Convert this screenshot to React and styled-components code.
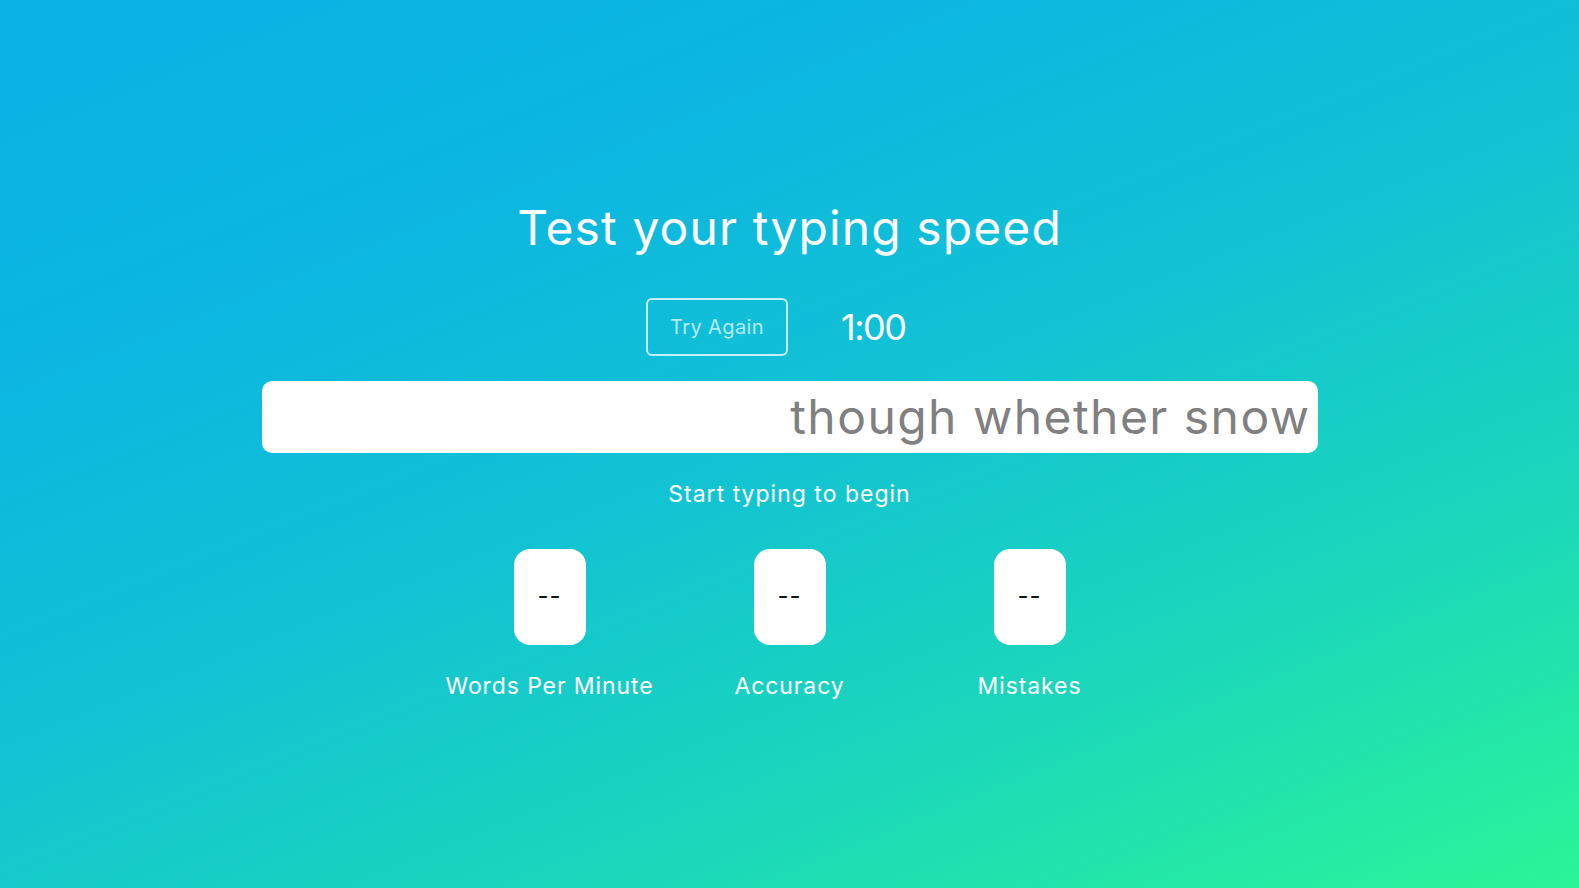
import React, { useState } from 'react';
import styled, { createGlobalStyle } from 'styled-components';

const GlobalStyle = createGlobalStyle`
  html, body {
    margin: 0;
    padding: 0;
  }
  body {
    font-family: 'Inter', 'Noto Sans', sans-serif;
    -webkit-font-smoothing: antialiased;
  }
  * {
    box-sizing: border-box;
  }
`;

// blue for most of the page, green pooling in the lower right corner
const Page = styled.main`
  min-height: 100vh;
  display: flex;
  flex-direction: column;
  align-items: center;
  padding-top: 199px;
  background: linear-gradient(
    158deg,
    #0ab2e4 0%,
    #0cb6e1 25%,
    #12c3d3 50%,
    #1cd8b9 75%,
    #2af598 100%
  );
  color: #ffffff;
`;

const Title = styled.h1`
  margin: 0;
  font-size: 48px;
  line-height: 58px;
  font-weight: 400;
  letter-spacing: 1.1px;
`;

const Controls = styled.div`
  display: flex;
  align-items: center;
  margin-top: 41px;
`;

const RetryButton = styled.button`
  width: 142px;
  height: 58px;
  border: 2px solid rgba(255, 255, 255, 0.75);
  border-radius: 6px;
  background: transparent;
  color: rgba(255, 255, 255, 0.7);
  font-family: inherit;
  font-size: 20px;
  letter-spacing: 0.4px;
  cursor: pointer;
`;

const Timer = styled.div`
  width: 92px;
  margin-left: 53px;
  font-size: 36px;
  line-height: 44px;
  letter-spacing: -1.5px;
  text-align: left;
`;

const Track = styled.div`
  width: 1056px;
  height: 72px;
  margin-top: 25px;
  padding: 0 7px 0 10px;
  border-radius: 10px;
  background: #ffffff;
  color: #808080;
  font-size: 48px;
  line-height: 72px;
  text-align: right;
  white-space: nowrap;
  overflow: hidden;
  letter-spacing: 1.45px;
`;

const Hint = styled.p`
  margin: 25px 0 0;
  font-size: 23px;
  line-height: 33px;
  letter-spacing: 1px;
`;

const Stats = styled.div`
  display: grid;
  grid-template-columns: repeat(3, 240px);
  margin-top: 38px;
`;

const Stat = styled.div`
  display: flex;
  flex-direction: column;
  align-items: center;
`;

const StatValue = styled.div`
  width: 72px;
  height: 96px;
  display: flex;
  align-items: center;
  justify-content: center;
  padding-bottom: 4px;
  border-radius: 16px;
  background: #ffffff;
  color: #111111;
  font-size: 24px;
  letter-spacing: 1px;
`;

const StatLabel = styled.div`
  margin-top: 25px;
  font-size: 23px;
  line-height: 33px;
  letter-spacing: 0.9px;
`;

const STATS = [
  { id: 'wpm', label: 'Words Per Minute' },
  { id: 'accuracy', label: 'Accuracy' },
  { id: 'mistakes', label: 'Mistakes' }
];

export default function App() {
  const [words] = useState('though whether snow');

  return (
    <>
      <GlobalStyle />
      <Page>
        <Title>Test your typing speed</Title>
        <Controls>
          <RetryButton>Try Again</RetryButton>
          <Timer>1:00</Timer>
        </Controls>
        <Track>{words}</Track>
        <Hint>Start typing to begin</Hint>
        <Stats>
          {STATS.map((stat) => (
            <Stat key={stat.id}>
              <StatValue>--</StatValue>
              <StatLabel>{stat.label}</StatLabel>
            </Stat>
          ))}
        </Stats>
      </Page>
    </>
  );
}
